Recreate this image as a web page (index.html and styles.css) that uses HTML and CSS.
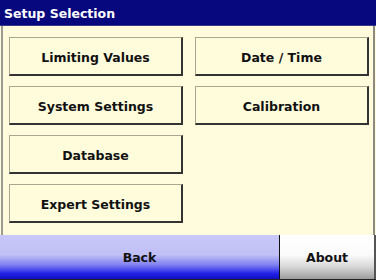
FILE: index.html
```html
<!DOCTYPE html>
<html lang="en">
<head>
    <meta charset="UTF-8">
    <title>Setup Selection</title>
    <link rel="stylesheet" href="styles.css">
</head>
<body>
    <div class="screen">
        <header class="titlebar">Setup Selection</header>
        <main class="panel">
            <div class="grid">
                <button class="setup-btn">Limiting Values</button>
                <button class="setup-btn">Date / Time</button>
                <button class="setup-btn">System Settings</button>
                <button class="setup-btn">Calibration</button>
                <button class="setup-btn">Database</button>
                <div></div>
                <button class="setup-btn">Expert Settings</button>
            </div>
        </main>
        <footer class="softkeys">
            <button class="key key-back">Back</button>
            <button class="key key-about">About</button>
        </footer>
    </div>
</body>
</html>
```

FILE: styles.css
```css
body {
    margin: 0;
    padding: 0;
    background-color: #fffbdc;
    font-family: "DejaVu Sans", Verdana, sans-serif;
}
.screen {
    width: 376px;
    height: 280px;
    display: flex;
    flex-direction: column;
    overflow: hidden;
}
.titlebar {
    height: 26px;
    line-height: 27px;
    background-color: #07077e;
    color: white;
    font-weight: bold;
    font-size: 12.5px;
    padding-left: 4px;
    box-sizing: border-box;
    border-bottom: 1px solid #3a3a8a;
}
.panel {
    flex: 1;
    border-left: 2px solid #9a9a90;
    border-right: 2px solid #8a8a80;
    margin-left: 1px;
    margin-right: 1px;
    padding: 11px 6px 0 6px;
}
.grid {
    display: grid;
    grid-template-columns: 174px 174px;
    grid-auto-rows: 39px;
    column-gap: 12px;
    row-gap: 10px;
}
.setup-btn {
    background-color: #fffcdc;
    border-style: solid;
    border-width: 1px 2px 2px 1px;
    border-color: #a8a890 #333 #333 #a8a890;
    font-family: inherit;
    font-weight: bold;
    font-size: 12.5px;
    color: #111;
    padding: 2px 0 0 0;
    cursor: pointer;
}
.softkeys {
    height: 44px;
    display: flex;
    border-bottom: 1px solid #222;
}
.key {
    border: none;
    font-family: inherit;
    font-weight: bold;
    font-size: 12.5px;
    color: #111;
    padding: 0;
    cursor: pointer;
}
.key-back {
    width: 280px;
    background: linear-gradient(#c8c8fa 0%, #c0c0f6 45%, #8080f0 68%, #2020e8 88%, #1010c0 100%);
    border-right: 1px solid #111;
}
.key-about {
    flex: 1;
    background: linear-gradient(#ffffff 0%, #fbfbfb 45%, #d8d8d8 72%, #9c9c9c 100%);
    border-right: 2px solid #555;
}
```
